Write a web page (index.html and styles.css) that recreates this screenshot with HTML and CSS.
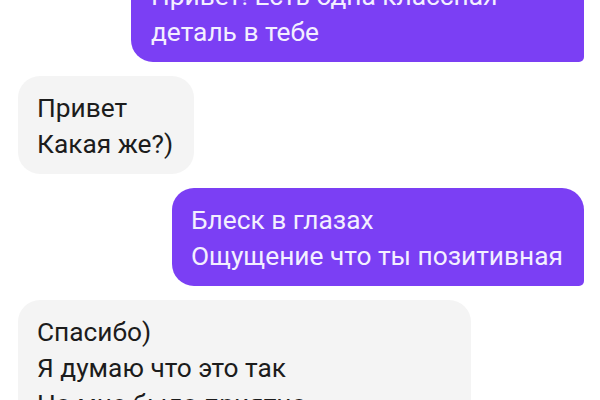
FILE: index.html
```html
<!DOCTYPE html>
<html lang="ru">
<head>
<meta charset="utf-8">
<link rel="stylesheet" href="styles.css">
</head>
<body>
<div class="chat">
  <div class="msg out first"><div class="line">Привет! Есть одна классная</div><div class="line">деталь в тебе</div></div>
  <div class="msg in"><div class="line">Привет</div><div class="line">Какая же?)</div></div>
  <div class="msg out"><div class="line">Блеск в глазах</div><div class="line">Ощущение что ты позитивная</div></div>
  <div class="msg in wide"><div class="line">Спасибо)</div><div class="line">Я думаю что это так</div><div class="line">Но мне было приятно</div></div>
</div>
</body>
</html>
```

FILE: styles.css
```css
html, body {
  margin: 0;
  background: #ffffff;
}
body {
  width: 600px;
  height: 400px;
  overflow: hidden;
  font-family: Roboto, "Noto Sans", sans-serif;
}
.chat {
  display: flex;
  flex-direction: column;
  gap: 14px;
  padding: 0 16px 0 18px;
  margin-top: -36px;
}
.msg {
  font-size: 26.3px;
  line-height: 36px;
  padding: 14px 21px 12px 19px;
  border-radius: 22px;
  white-space: nowrap;
}
.out {
  align-self: flex-end;
  background: #7b3ff4;
  color: #f3efff;
  border-bottom-right-radius: 5px;
}
.in {
  align-self: flex-start;
  background: #f4f4f4;
  color: #1c1c1c;
}
.out.first {
  width: 414px;
  padding-left: 20px;
  padding-right: 19px;
}
.in.wide {
  width: 413px;
}
```
